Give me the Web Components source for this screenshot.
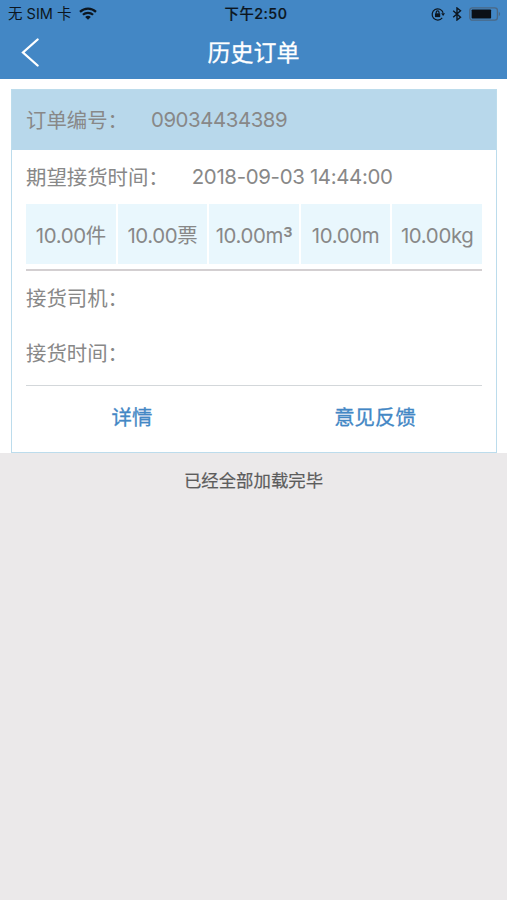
<!DOCTYPE html>
<html lang="zh-CN">
<head>
<meta charset="UTF-8">
<meta name="viewport" content="width=device-width, initial-scale=1.0">
<title>历史订单</title>
<style>
  body {
    margin: 0;
    background: #ebe9ea;
    font-family: Inter, "Noto Sans CJK SC", sans-serif;
    color: #888;
  }

  .cube {
    font-family: Roboto, sans-serif;
    font-size: 26px;
    line-height: 0;
    vertical-align: -2px;
  }
</style>
</head>
<body>
<order-page>
  <status-bar slot="top" carrier="无 SIM 卡" time="下午2:50"></status-bar>
  <nav-header slot="top">历史订单</nav-header>
  <order-card number="09034434389" expected="2018-09-03 14:44:00">
    <quantity-cell slot="quantity">10.00件</quantity-cell>
    <quantity-cell slot="quantity">10.00票</quantity-cell>
    <quantity-cell slot="quantity">10.00m<span class="cube">³</span></quantity-cell>
    <quantity-cell slot="quantity">10.00m</quantity-cell>
    <quantity-cell slot="quantity">10.00kg</quantity-cell>
    <info-row slot="info">接货司机：</info-row>
    <info-row slot="info">接货时间：</info-row>
    <card-action slot="action">详情</card-action>
    <card-action slot="action">意见反馈</card-action>
  </order-card>
  <span slot="footer">已经全部加载完毕</span>
</order-page>

<script>
class OrderPage extends HTMLElement {
  connectedCallback() {
    this.attachShadow({ mode: 'open' });
    this.shadowRoot.innerHTML = `
      <style>
        :host {
          display: flex;
          flex-direction: column;
          height: 900px;
          overflow: hidden;
        }

        .top {
          height: 79px;
          background: #4387c5;
        }

        .list {
          background: #fff;
          padding: 10px 10px 0 11px;
        }

        .footer {
          padding-top: 15px;
          text-align: center;
          font-size: 17.4px;
          line-height: 26px;
          color: #5c5c5c;
          -webkit-text-stroke: 0.2px;
        }
      </style>

      <header class="top"><slot name="top"></slot></header>
      <main class="list"><slot></slot></main>
      <footer class="footer"><slot name="footer"></slot></footer>
    `;
  }
}

class StatusBar extends HTMLElement {
  connectedCallback() {
    this.attachShadow({ mode: 'open' });
    this.shadowRoot.innerHTML = `
      <style>
        :host {
          display: grid;
          grid-template-columns: 1fr auto 1fr;
          align-items: center;
          height: 27px;
          padding: 0 6px 0 8px;
          font-size: 14.5px;
          line-height: 27px;
          color: #0c1620;
        }

        .left, .right {
          display: flex;
          align-items: center;
        }

        .left {
          gap: 8px;
        }

        .right {
          justify-content: flex-end;
        }

        .time {
          padding-left: 3px;
          font-weight: 500;
          font-size: 14.3px;
          line-height: 26px;
          letter-spacing: 0.5px;
          -webkit-text-stroke: 0.2px;
        }

        svg {
          display: block;
        }

        .lock {
          margin-right: 7px;
        }

        .bluetooth {
          margin-right: 7px;
        }
      </style>

      <div class="left">
        <span id="carrier"></span>
        <svg width="18" height="13" viewBox="0 0 18 13" fill="none" stroke="#0c1620" stroke-width="2.2">
          <path d="M1 4.9C5.5 .5 12.5 .5 17 4.9"/>
          <path d="M3.9 7.8C6.8 5.1 11.2 5.1 14.1 7.8"/>
          <path d="M9 12.7L6.2 9.9C7.8 8.5 10.2 8.5 11.8 9.9Z" fill="#0c1620" stroke="none"/>
        </svg>
      </div>
      <span class="time" id="time"></span>
      <div class="right">
        <svg class="lock" width="14" height="14" viewBox="0 0 14 14" fill="none" stroke="#0c1620" stroke-width="1.2">
          <path d="M11.2 10.9A5.6 5.6 0 1 1 12.1 5.8"/>
          <path d="M10.2 6.3H14L12.1 9Z" fill="#0c1620" stroke="none"/>
          <rect x="4" y="6.3" width="5.2" height="3.8" fill="#0c1620" stroke="none"/>
          <path d="M5.2 6.5V5.2a1.4 1.4 0 0 1 2.8 0V6.5"/>
        </svg>
        <svg class="bluetooth" width="10" height="14" viewBox="0 0 10 14" fill="none" stroke="#0c1620" stroke-width="1.4">
          <path d="M1.2 3.8L8.5 10.2L5 13V1L8.5 3.8L1.2 10.2"/>
        </svg>
        <svg width="32" height="14" viewBox="0 0 32 14">
          <rect x=".8" y=".8" width="27.6" height="12.4" rx="2.6" fill="none" stroke="#4b6884" stroke-width="1.3"/>
          <rect x="2.6" y="2.5" width="19.5" height="9" rx=".8" fill="#0b1016"/>
          <path d="M29.8 4.8C31.6 5.6 31.6 8.4 29.8 9.2Z" fill="#4b6884"/>
        </svg>
      </div>
    `;
    this.shadowRoot.getElementById('carrier').textContent = this.getAttribute('carrier');
    this.shadowRoot.getElementById('time').textContent = this.getAttribute('time');
  }
}

class NavHeader extends HTMLElement {
  connectedCallback() {
    this.attachShadow({ mode: 'open' });
    this.shadowRoot.innerHTML = `
      <style>
        :host {
          display: grid;
          grid-template-columns: 1fr auto 1fr;
          align-items: center;
          height: 51px;
          padding: 0 21px;
          font-size: 23px;
          line-height: 50px;
          color: #fff;
        }

        .title {
          padding-top: 1px;
          -webkit-text-stroke: 0.3px;
        }
      </style>

      <svg width="19" height="30" viewBox="0 0 19 30" fill="none" stroke="#fff" stroke-width="2.3" stroke-linecap="round">
        <path d="M16.6 1.5L2 14.5L16.6 27.5"/>
      </svg>
      <span class="title"><slot></slot></span>
    `;
  }
}

class OrderCard extends HTMLElement {
  connectedCallback() {
    this.attachShadow({ mode: 'open' });
    this.shadowRoot.innerHTML = `
      <style>
        :host {
          display: block;
          box-sizing: border-box;
          height: 364px;
          border: 1px solid #bcdcec;
          background: #fff;
          font-size: 20.4px;
        }

        .head {
          display: flex;
          gap: 23px;
          height: 60px;
          padding-left: 14px;
          line-height: 61px;
          background: #b8d8eb;
        }

        #number {
          line-height: 59px;
          letter-spacing: -0.42px;
        }

        #expected {
          line-height: 54px;
          letter-spacing: -0.32px;
        }

        .body {
          padding: 0 14px;
        }

        .expected {
          display: flex;
          gap: 23px;
          height: 54px;
          line-height: 56px;
        }

        .quantities {
          display: grid;
          grid-template-columns: repeat(5, 1fr);
          gap: 2px;
          height: 60px;
          padding-bottom: 5px;
          border-bottom: 2px solid #d3cfd1;
        }

        .info {
          height: 114px;
          border-bottom: 1px solid #d3d7da;
        }

        .actions {
          display: grid;
          grid-template-columns: 212px 1fr;
          column-gap: 30px;
          line-height: 63px;
        }
      </style>

      <div class="head">
        <span>订单编号：</span>
        <span id="number"></span>
      </div>
      <div class="body">
        <div class="expected">
          <span>期望接货时间：</span>
          <span id="expected"></span>
        </div>
        <div class="quantities"><slot name="quantity"></slot></div>
        <div class="info"><slot name="info"></slot></div>
        <div class="actions"><slot name="action"></slot></div>
      </div>
    `;
    this.shadowRoot.getElementById('number').textContent = this.getAttribute('number');
    this.shadowRoot.getElementById('expected').textContent = this.getAttribute('expected');
  }
}

class QuantityCell extends HTMLElement {
  connectedCallback() {
    this.attachShadow({ mode: 'open' });
    this.shadowRoot.innerHTML = `
      <style>
        :host {
          display: block;
          background: #e9f7fd;
          text-align: center;
          white-space: nowrap;
          letter-spacing: -0.35px;
          line-height: 63px;
          height: 60px;
        }
      </style>
      <slot></slot>
    `;
  }
}

class InfoRow extends HTMLElement {
  connectedCallback() {
    this.attachShadow({ mode: 'open' });
    this.shadowRoot.innerHTML = `
      <style>
        :host {
          display: block;
          height: 54.5px;
          line-height: 56px;
        }
      </style>
      <slot></slot>
    `;
  }
}

class CardAction extends HTMLElement {
  connectedCallback() {
    this.attachShadow({ mode: 'open' });
    this.shadowRoot.innerHTML = `
      <style>
        :host {
          display: block;
          text-align: center;
          color: #4387c5;
          -webkit-text-stroke: 0.3px;
        }
      </style>
      <slot></slot>
    `;
  }
}

customElements.define('order-page', OrderPage);
customElements.define('status-bar', StatusBar);
customElements.define('nav-header', NavHeader);
customElements.define('order-card', OrderCard);
customElements.define('quantity-cell', QuantityCell);
customElements.define('info-row', InfoRow);
customElements.define('card-action', CardAction);
</script>
</body>
</html>
